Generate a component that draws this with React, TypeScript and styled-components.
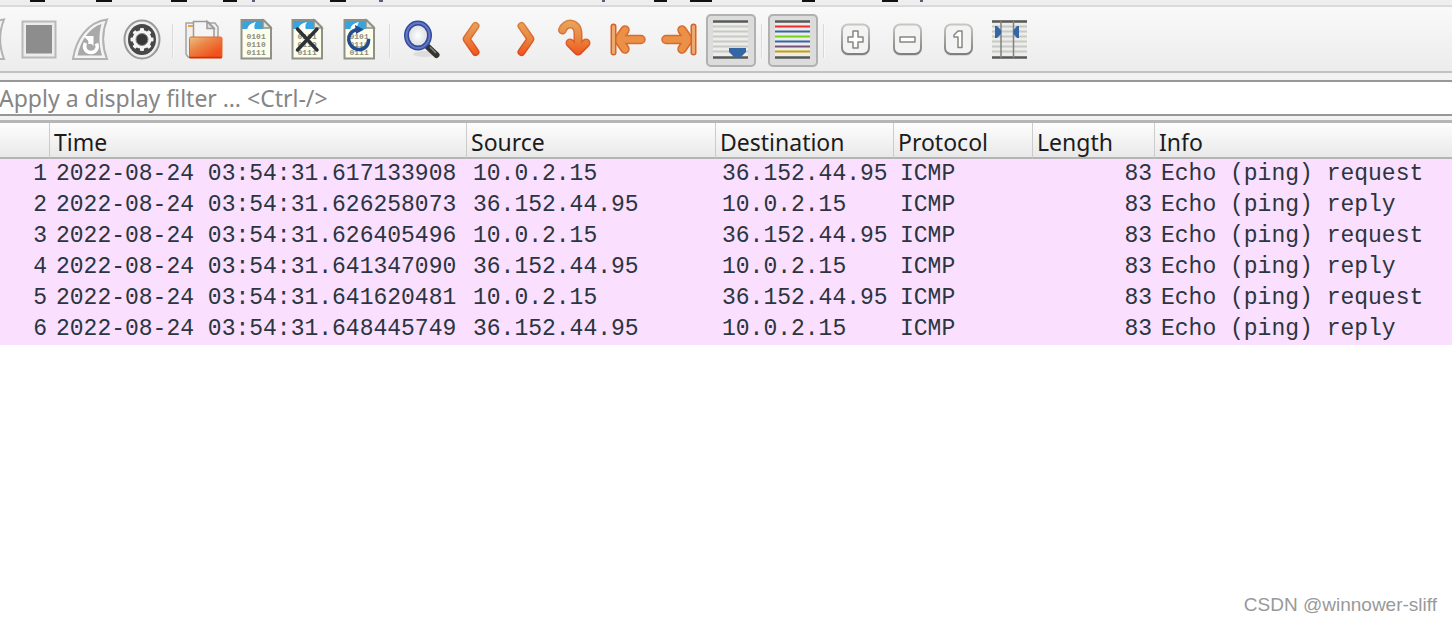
import React from "react";
import styled, { createGlobalStyle } from "styled-components";

const GlobalStyle = createGlobalStyle`
  * { box-sizing: border-box; }
  body { margin: 0; background: #fff; font-family: "Noto Sans", "Open Sans", sans-serif; }
`;

const Window = styled.main`
  display: flex;
  flex-direction: column;
  min-height: 100vh;
  overflow: hidden;
`;

const MenuEdge = styled.div`
  height: 7px;
  background: #eeeeee;
  border-bottom: 2px solid #dadada;
  svg { display: block; }
`;

const Toolbar = styled.div`
  display: flex;
  align-items: center;
  height: 66px;
  margin-left: -38px;
  padding-top: 3px;
  background: linear-gradient(#f9f9f9, #ececec);
  border-bottom: 2px solid #c2c2c2;
`;

const Group = styled.div<{ $width: number }>`
  display: flex;
  flex: none;
  justify-content: space-between;
  width: ${(p) => p.$width}px;
`;

const Separator = styled.div`
  flex: none;
  width: 2px;
  height: 34px;
  margin: 0 5px;
  background: #d9d9d9;
  border-right: 1px solid #f8f8f8;
`;

const ToolButton = styled.button<{ $pressed?: boolean }>`
  flex: none;
  width: 50px;
  height: 53px;
  padding: 0;
  border: 0;
  border-radius: 5px;
  background: ${(p) => (p.$pressed ? "#dcdcdc" : "transparent")};
  box-shadow: ${(p) => (p.$pressed ? "inset 0 0 0 2px #b1b1b1" : "none")};
  svg { display: block; }
`;

const FilterBar = styled.div`
  padding: 7px 0 4px;
  background: #f2f2f2;
  border-bottom: 3px solid #b6b6b6;
`;

const FilterInput = styled.input`
  display: block;
  width: 100%;
  height: 36px;
  padding: 0;
  border: solid #979797;
  border-width: 2px 0;
  border-radius: 0;
  background: #fff;
  color: #222;
  font: 23px "Noto Sans", "Open Sans", sans-serif;
  outline: 0;
  text-indent: -1px;
  &::placeholder { color: #858585; opacity: 1; }
`;

const PacketTable = styled.table`
  width: 100%;
  table-layout: fixed;
  border-collapse: separate;
  border-spacing: 0;
`;

const HeadCell = styled.th`
  height: 36px;
  padding: 4px 0 0 4px;
  border-right: 1px solid #cbcbcb;
  border-bottom: 2px solid #b4b4b4;
  background: linear-gradient(#fdfdfd, #e9e9e9);
  color: #1c1c1c;
  font: 23px/30px "Noto Sans", "Open Sans", sans-serif;
  text-align: left;
  white-space: nowrap;
  &:last-child { border-right: 0; }
`;

const Row = styled.tr`
  background: #fadffe;
  color: #2a3540;
`;

const Cell = styled.td<{ $right?: boolean }>`
  height: 31px;
  padding: 0 3px 0 6px;
  font: 23px/31px "Liberation Mono", monospace;
  text-align: ${(p) => (p.$right ? "right" : "left")};
  white-space: nowrap;
`;

const Watermark = styled.footer`
  margin-top: auto;
  padding: 0 15px 4px;
  color: #999;
  font: 19px/24px "Liberation Sans", Arial, sans-serif;
  text-align: right;
`;

const Icon = ({ children }: { children: React.ReactNode }) => (
  <svg width="50" height="53" viewBox="0 0 50 53" fill="none" aria-hidden="true">
    {children}
  </svg>
);

const Fin = () => (
  <>
    <path d="M8 45C11 25 23 8 42 5.500C37 18 37 32 42 45Z" fill="#f3f3f3" stroke="#b2b2b2" strokeWidth="2" />
    <path d="M12.500 41.500C16 26 24 14 36.500 10C33.500 21 34 31 37 41.500Z" fill="#a9a9a9" />
  </>
);

const Document = ({ children }: { children?: React.ReactNode }) => (
  <Icon>
    <path d="M10.500 6H33L40 13V44.500H10.500Z" fill="#fdfdec" />
    <path d="M11 6H32V15H11Z" fill="#35a4df" />
    <path d="M16 16C17 11 20 9 25 8C23 11 23 13 24 16Z" fill="#fff" />
    <path d="M10.500 6H32.500L40 13.500V44.500H10.500Z" stroke="#8f9188" strokeWidth="2" />
    <path d="M32 6V14H40Z" fill="#e2e3da" stroke="#8f9188" strokeWidth="1.500" />
    <g fill="#8b8c83" fontFamily="Liberation Mono, monospace" fontSize="8" fontWeight="700">
      <text x="15.500" y="25">0101</text>
      <text x="15.500" y="33">0110</text>
      <text x="15.500" y="41">0111</text>
    </g>
    {children}
  </Icon>
);

const ArrowPaint = () => (
  <defs>
    <linearGradient id="orange" x1="0" y1="8" x2="0" y2="42" gradientUnits="userSpaceOnUse">
      <stop stopColor="#e9a35c" />
      <stop offset="0.500" stopColor="#e8853f" />
      <stop offset="1" stopColor="#f2511b" />
    </linearGradient>
    <linearGradient id="rim" x1="0" y1="8" x2="0" y2="42" gradientUnits="userSpaceOnUse">
      <stop stopColor="#da8440" />
      <stop offset="1" stopColor="#dc4519" />
    </linearGradient>
  </defs>
);

const Arrow = ({ d }: { d: string }) => (
  <Icon>
    <ArrowPaint />
    <g strokeLinecap="round" strokeLinejoin="round">
      <path d={d} stroke="url(#rim)" strokeWidth="8" />
      <path d={d} stroke="url(#orange)" strokeWidth="5" />
    </g>
  </Icon>
);

const EdgeArrow = ({ flip }: { flip?: boolean }) => (
  <Icon>
    <g
      transform={flip ? "translate(50 0) scale(-1 1)" : undefined}
      strokeLinecap="round"
      strokeLinejoin="round"
    >
      <path d="M38 25.500H17M22 16L15.500 25.500L22 35" stroke="#d96a2c" strokeWidth="9.500" />
      <path d="M38 25.500H17M22 16L15.500 25.500L22 35" stroke="#ea9147" strokeWidth="6.500" />
      <path d="M10.500 12.500V38.500" stroke="#d9602a" strokeWidth="6" />
      <path d="M10.500 12.500V38.500" stroke="#ecaa6c" strokeWidth="3" />
    </g>
  </Icon>
);

const lineRows = [12.5, 17.5, 22.5, 27.5, 32.5, 37.5];

const Lines = ({ colors }: { colors: string[] }) => (
  <>
    <rect x="7" y="6" width="35" height="38" fill="#ededeb" />
    {lineRows.map((y, i) => (
      <path key={y} d={`M7 ${y}H42`} stroke={colors[i % colors.length]} strokeWidth="2" />
    ))}
    <path d="M7 7.500H42M7 43.500H42" stroke="#555957" strokeWidth="2.500" />
  </>
);

const Key = ({ children }: { children: React.ReactNode }) => (
  <Icon>
    <defs>
      <linearGradient id="keyRim" x1="0" y1="10" x2="0" y2="41" gradientUnits="userSpaceOnUse">
        <stop stopColor="#c9c9c4" />
        <stop offset="1" stopColor="#7d7d79" />
      </linearGradient>
    </defs>
    <rect x="12" y="12" width="27" height="30" rx="6" fill="#d6d6d6" />
    <rect x="12" y="10.500" width="27" height="29.500" rx="6" fill="#f3f3f3" stroke="url(#keyRim)" strokeWidth="2" />
    <g fill="#fff" stroke="#868682" strokeWidth="1.500" strokeLinejoin="round">
      {children}
    </g>
  </Icon>
);

const Teeth = () => (
  <>
    {[0, 45, 90, 135, 180, 225, 270, 315].map((a) => (
      <rect key={a} x="23" y="14" width="4" height="6" rx="1" fill="#f4f4f4" transform={`rotate(${a} 25 25.500)`} />
    ))}
  </>
);

type Tool = { label: string; icon: React.ReactNode; pressed?: boolean };

const groups: { width: number; tools: Tool[] }[] = [
  {
    width: 205,
    tools: [
      { label: "Start capture", icon: <Icon><Fin /></Icon> },
      {
        label: "Stop capture",
        icon: (
          <Icon>
            <rect x="8.500" y="7.500" width="33" height="36" fill="#ececec" stroke="#b9b9b9" strokeWidth="2" />
            <rect x="12" y="11" width="26" height="28.500" fill="#8d8d8d" />
          </Icon>
        ),
      },
      {
        label: "Restart capture",
        icon: (
          <Icon>
            <Fin />
            <path d="M20.500 29C18 34 21 38.500 26 38.500C31 38.500 33.500 34 31.500 29.500" stroke="#fff" strokeWidth="3.500" />
            <path d="M25 30V24" stroke="#fff" strokeWidth="3.500" />
            <path d="M18.500 22H28.500V32Z" fill="#fff" />
          </Icon>
        ),
      },
      {
        label: "Capture options",
        icon: (
          <Icon>
            <ellipse cx="25" cy="25.500" rx="17.500" ry="19" fill="#efefef" stroke="#999" strokeWidth="2" />
            <ellipse cx="25" cy="25.500" rx="14" ry="15.500" fill="#484848" />
            <circle cx="25" cy="25.500" r="9.500" fill="#f4f4f4" />
            <Teeth />
            <circle cx="25" cy="25.500" r="6" fill="#383838" stroke="#888" />
          </Icon>
        ),
      },
    ],
  },
  {
    width: 205,
    tools: [
      {
        label: "Open file",
        icon: (
          <Icon>
            <defs>
              <linearGradient id="folder" x1="14" y1="22" x2="26" y2="45" gradientUnits="userSpaceOnUse">
                <stop stopColor="#edbd83" />
                <stop offset="0.450" stopColor="#ea8747" />
                <stop offset="1" stopColor="#f2511c" />
              </linearGradient>
            </defs>
            <path d="M7 9H36L39 13V43H9L7 40Z" fill="#f0f0ee" stroke="#a4a4a1" strokeWidth="1.500" />
            <path d="M9 12H14" stroke="#f2a140" strokeWidth="2" />
            <path d="M14.500 26V7.500H28.500L35 14V26Z" fill="#f5f5f5" stroke="#9b9b9b" strokeWidth="1.500" />
            <path d="M28 7.500V14.500H35Z" fill="#ddd" stroke="#9b9b9b" strokeWidth="1.500" />
            <rect x="10.500" y="23" width="32.500" height="21" rx="1.500" fill="url(#folder)" stroke="#df6a33" />
            <path d="M10 43.500H43" stroke="#cf2f10" strokeWidth="1.500" />
          </Icon>
        ),
      },
      { label: "Save file", icon: <Document /> },
      {
        label: "Close file",
        icon: (
          <Document>
            <path d="M15.500 15L35 36M35 15L15.500 36" stroke="#2c3236" strokeWidth="3.500" strokeLinecap="round" />
          </Document>
        ),
      },
      {
        label: "Reload file",
        icon: (
          <Document>
            <path d="M24 15.500C10 17 13 35.500 25 35.500C31 35.500 35 31 34.500 25" stroke="#234c8d" strokeWidth="3.500" />
            <path d="M21 11L30 15.500L22 20Z" fill="#234c8d" />
          </Document>
        ),
      },
    ],
  },
  {
    width: 360,
    tools: [
      {
        label: "Find packet",
        icon: (
          <Icon>
            <defs>
              <radialGradient id="lens">
                <stop stopColor="#fff" />
                <stop offset="1" stopColor="#d5d8da" />
              </radialGradient>
            </defs>
            <ellipse cx="29" cy="40" rx="12" ry="3" fill="#ddd" />
            <path d="M32 33L40.500 41" stroke="#33332f" strokeWidth="6" strokeLinecap="round" />
            <path d="M34 33L40 39" stroke="#85857c" strokeWidth="1.500" />
            <ellipse cx="22" cy="21.500" rx="11.500" ry="12.500" fill="url(#lens)" stroke="#2f4aa0" strokeWidth="5" />
            <ellipse cx="22" cy="21.500" rx="11.500" ry="12.500" stroke="#6878be" strokeWidth="2" />
          </Icon>
        ),
      },
      { label: "Previous packet", icon: <Arrow d="M27.500 12L18.500 25L27.500 38" /> },
      { label: "Next packet", icon: <Arrow d="M22.500 12L31.500 25L22.500 38" /> },
      {
        label: "Go to packet",
        icon: (
          <Icon>
            <ArrowPaint />
            <g strokeLinecap="round" strokeLinejoin="round">
              <path d="M11.500 16C14 8 27 7 27 20V36M19 29L27 37L35 29" stroke="url(#rim)" strokeWidth="9" />
              <path d="M11.500 16C14 8 27 7 27 20V36M19 29L27 37L35 29" stroke="url(#orange)" strokeWidth="6" />
            </g>
          </Icon>
        ),
      },
      { label: "First packet", icon: <EdgeArrow /> },
      { label: "Last packet", icon: <EdgeArrow flip /> },
      {
        label: "Auto scroll",
        pressed: true,
        icon: (
          <Icon>
            <Lines colors={["#c7c9c4"]} />
            <path d="M23 34H40V38L34 44H29L23 38Z" fill="#3465a4" />
          </Icon>
        ),
      },
    ],
  },
  {
    width: 50,
    tools: [
      {
        label: "Colorize packets",
        pressed: true,
        icon: (
          <Icon>
            <Lines colors={["#ef2929", "#3465a4", "#73d216", "#3465a4", "#75507b", "#c4a000"]} />
          </Icon>
        ),
      },
    ],
  },
  {
    width: 205,
    tools: [
      {
        label: "Zoom in",
        icon: <Key><path d="M23 17H28V23H33V28H28V34H23V28H18V23H23Z" /></Key>,
      },
      { label: "Zoom out", icon: <Key><path d="M18 23H33V28H18Z" /></Key> },
      {
        label: "Normal size",
        icon: <Key><path d="M21 21L25 17H29V33.500H25V23H21Z" /></Key>,
      },
      {
        label: "Resize columns",
        icon: (
          <Icon>
            <Lines colors={["#c7c9c4"]} />
            <path d="M16 7V44M28.500 7V44" stroke="#80827c" strokeWidth="1.500" />
            <path d="M10 12H12L16 16V20L12 24H10ZM34 12H32L28.500 16V20L32 24H34Z" fill="#3465a4" />
          </Icon>
        ),
      },
    ],
  },
];

// Mnemonic underlines and descender tips left by the menu bar: [x, width]
const underlines = [
  [30, 15], [96, 16], [171, 16], [223, 14], [330, 16], [654, 13],
  [690, 22], [802, 13], [882, 16],
];
const tips = [[252, 3], [379, 4], [602, 3], [920, 3]];

const columns: { title: string; width?: number }[] = [
  { title: "", width: 50 },
  { title: "Time", width: 417 },
  { title: "Source", width: 249 },
  { title: "Destination", width: 178 },
  { title: "Protocol", width: 139 },
  { title: "Length", width: 122 },
  { title: "Info" },
];

const HOST = "10.0.2.15";
const PEER = "36.152.44.95";

const times = [
  "2022-08-24 03:54:31.617133908",
  "2022-08-24 03:54:31.626258073",
  "2022-08-24 03:54:31.626405496",
  "2022-08-24 03:54:31.641347090",
  "2022-08-24 03:54:31.641620481",
  "2022-08-24 03:54:31.648445749",
];

export default function App() {
  return (
    <Window>
      <GlobalStyle />
      <MenuEdge>
        <svg width="960" height="2" aria-hidden="true">
          {underlines.map(([x, w]) => <rect key={x} x={x} width={w} height="2" fill="#111" />)}
          {tips.map(([x, w]) => <rect key={x} x={x} width={w} height="2" fill="#5a5f78" />)}
        </svg>
      </MenuEdge>
      <Toolbar role="toolbar" aria-label="Capture tools">
        {groups.map((group, i) => (
          <React.Fragment key={i}>
            {i > 0 && <Separator />}
            <Group $width={group.width}>
              {group.tools.map((tool) => (
                <ToolButton key={tool.label} type="button" aria-label={tool.label} $pressed={tool.pressed}>
                  {tool.icon}
                </ToolButton>
              ))}
            </Group>
          </React.Fragment>
        ))}
      </Toolbar>
      <FilterBar>
        <FilterInput aria-label="Display filter" placeholder="Apply a display filter … <Ctrl-/>" />
      </FilterBar>
      <PacketTable>
        <colgroup>
          {columns.map((c) => <col key={c.title} width={c.width} />)}
        </colgroup>
        <thead>
          <tr>
            {columns.map((c) => <HeadCell key={c.title} scope="col">{c.title}</HeadCell>)}
          </tr>
        </thead>
        <tbody>
          {times.map((time, i) => {
            const request = i % 2 === 0;
            return (
              <Row key={time}>
                <Cell $right>{i + 1}</Cell>
                <Cell>{time}</Cell>
                <Cell>{request ? HOST : PEER}</Cell>
                <Cell>{request ? PEER : HOST}</Cell>
                <Cell>ICMP</Cell>
                <Cell $right>83</Cell>
                <Cell>Echo (ping) {request ? "request" : "reply"}</Cell>
              </Row>
            );
          })}
        </tbody>
      </PacketTable>
      <Watermark>CSDN @winnower-sliff</Watermark>
    </Window>
  );
}
